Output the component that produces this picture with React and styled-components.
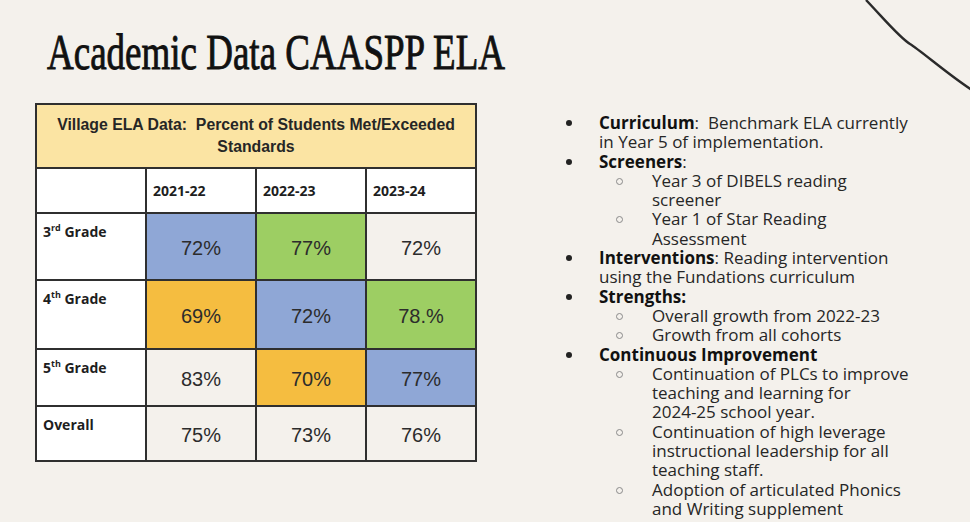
import React from 'react';
import styled, { createGlobalStyle } from 'styled-components';

const GlobalStyle = createGlobalStyle`
  html, body {
    margin: 0;
    padding: 0;
    background: #f4f1ec;
  }
  body {
    font-family: "Liberation Sans", Arial, sans-serif;
  }
`;

const Slide = styled.div`
  position: relative;
  width: 970px;
  height: 522px;
  overflow: hidden;
  background: #f4f1ec;
`;

const Swoosh = styled.svg`
  position: absolute;
  top: 0;
  right: 0;
`;

const Header = styled.header`
  height: 103px;
  padding: 27px 0 0 47px;
  box-sizing: border-box;
`;

const Title = styled.h1`
  display: inline-block;
  margin: 0;
  font-family: "Liberation Serif", "Times New Roman", serif;
  font-weight: 400;
  font-size: 50px;
  line-height: 50px;
  color: #111;
  white-space: nowrap;
  -webkit-text-stroke: 0.9px #111;
  transform: scaleX(0.74);
  transform-origin: left top;
`;

const Body = styled.div`
  display: flex;
  align-items: flex-start;
  padding-left: 35px;
`;

const Grid = styled.div`
  display: grid;
  grid-template-columns: repeat(4, 108px);
  grid-template-rows: 62px 43px 65px 67px 55px 53px;
  gap: 2px;
  padding: 2px;
  background: #2f2f2f;
`;

const Cell = styled.div`
  background: ${p => p.$bg || '#f4f1ec'};
`;

const Caption = styled(Cell)`
  grid-column: 1 / -1;
  background: #fbe4a3;
  display: flex;
  align-items: center;
  justify-content: center;
  text-align: center;
  font-weight: 700;
  font-size: 15.8px;
  line-height: 22px;
  color: #262626;
`;

const YearCell = styled(Cell)`
  background: #fff;
  display: flex;
  align-items: center;
  padding-left: 6px;
  font-family: "Open Sans", "Liberation Sans", sans-serif;
  font-weight: 700;
  font-size: 14px;
  color: #1e1e1e;
`;

const LabelCell = styled(Cell)`
  background: #fff;
  padding: 9px 0 0 6px;
  font-family: "Open Sans", "Liberation Sans", sans-serif;
  font-weight: 700;
  font-size: 14px;
  line-height: 18px;
  color: #1e1e1e;
  sup {
    font-size: 9px;
    line-height: 0;
    vertical-align: 6px;
  }
`;

const ValueCell = styled(Cell)`
  display: flex;
  align-items: center;
  justify-content: center;
  padding-top: 4px;
  font-size: 20px;
  color: #2c2c2c;
`;

const Notes = styled.ul`
  list-style: none;
  margin: 10px 0 0 88px;
  padding: 0;
  font-family: "Open Sans", "Liberation Sans", sans-serif;
  font-size: 17px;
  line-height: 19.3px;
  color: #262626;
  white-space: nowrap;
`;

const Item = styled.li`
  position: relative;
  padding-left: ${p => (p.$sub ? 87 : 34)}px;
  &::before {
    content: '';
    position: absolute;
    top: 7px;
    left: ${p => (p.$sub ? 51 : 1)}px;
    width: ${p => (p.$sub ? 5 : 6)}px;
    height: ${p => (p.$sub ? 5 : 6)}px;
    border-radius: 50%;
    background: ${p => (p.$sub ? 'transparent' : '#222')};
    border: ${p => (p.$sub ? '1px solid #8a8a8a' : 'none')};
  }
  b {
    font-weight: 700;
    color: #111;
  }
`;

const colors = {
  blue: '#8fa7d6',
  green: '#9dce63',
  orange: '#f5bd40',
};

const rows = [
  { label: '3', sup: 'rd', cells: [['72%', colors.blue], ['77%', colors.green], ['72%']] },
  { label: '4', sup: 'th', cells: [['69%', colors.orange], ['72%', colors.blue], ['78.%', colors.green]] },
  { label: '5', sup: 'th', cells: [['83%'], ['70%', colors.orange], ['77%', colors.blue]] },
  { label: 'Overall', cells: [['75%'], ['73%'], ['76%']] },
];

export default function App() {
  return (
    <Slide>
      <GlobalStyle />
      <Swoosh width="110" height="100" viewBox="0 0 110 100">
        <path d="M6 0 C 25 20, 40 38, 50 44 S 90 76, 112 90" fill="none" stroke="#2a2a2a" strokeWidth="2.4" />
      </Swoosh>
      <Header>
        <Title>Academic Data CAASPP ELA</Title>
      </Header>
      <Body>
        <Grid>
          <Caption>
            <span>Village ELA Data:&nbsp; Percent of Students Met/Exceeded<br />Standards</span>
          </Caption>
          <YearCell />
          <YearCell>2021-22</YearCell>
          <YearCell>2022-23</YearCell>
          <YearCell>2023-24</YearCell>
          {rows.map(r => (
            <React.Fragment key={r.label}>
              <LabelCell>
                {r.label}
                {r.sup && <sup>{r.sup}</sup>}
                {r.sup && ' Grade'}
              </LabelCell>
              {r.cells.map(([v, bg], i) => (
                <ValueCell key={i} $bg={bg}>{v}</ValueCell>
              ))}
            </React.Fragment>
          ))}
        </Grid>
        <Notes>
          <Item><b>Curriculum</b>:&nbsp; Benchmark ELA currently<br />in Year 5 of implementation.</Item>
          <Item><b>Screeners</b>:</Item>
          <Item $sub>Year 3 of DIBELS reading<br />screener</Item>
          <Item $sub>Year 1 of Star Reading<br />Assessment</Item>
          <Item><b>Interventions</b>: Reading intervention<br />using the Fundations curriculum</Item>
          <Item><b>Strengths:</b></Item>
          <Item $sub>Overall growth from 2022-23</Item>
          <Item $sub>Growth from all cohorts</Item>
          <Item><b>Continuous Improvement</b></Item>
          <Item $sub>Continuation of PLCs to improve<br />teaching and learning for<br />2024-25 school year.</Item>
          <Item $sub>Continuation of high leverage<br />instructional leadership for all<br />teaching staff.</Item>
          <Item $sub>Adoption of articulated Phonics<br />and Writing supplement</Item>
        </Notes>
      </Body>
    </Slide>
  );
}
